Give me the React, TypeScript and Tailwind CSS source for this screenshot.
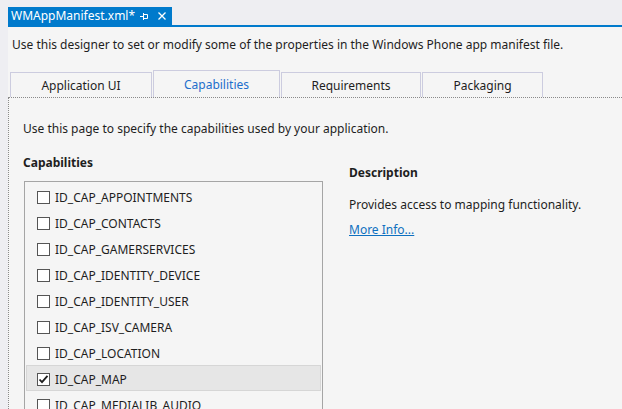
import React from "react";

const caps = [
  "ID_CAP_APPOINTMENTS",
  "ID_CAP_CONTACTS",
  "ID_CAP_GAMERSERVICES",
  "ID_CAP_IDENTITY_DEVICE",
  "ID_CAP_IDENTITY_USER",
  "ID_CAP_ISV_CAMERA",
  "ID_CAP_LOCATION",
  "ID_CAP_MAP",
  "ID_CAP_MEDIALIB_AUDIO",
  "ID_CAP_MEDIALIB_PHOTO",
];

function Checkbox({ checked }: { checked: boolean }) {
  return (
    <div className="w-[13px] h-[13px] border border-[#555555] bg-white flex items-center justify-center shrink-0">
      {checked && (
        <svg width="11" height="11" viewBox="0 0 11 11">
          <path d="M1.5 5.5 L4 8.2 L9.5 1.8" fill="none" stroke="#1e1e1e" strokeWidth="1.8" />
        </svg>
      )}
    </div>
  );
}

export default function App() {
  const tabs = [
    { label: "Application UI", w: "w-[142px]", active: false },
    { label: "Capabilities", w: "w-[127px]", active: true },
    { label: "Requirements", w: "w-[140px]", active: false },
    { label: "Packaging", w: "w-[121px]", active: false },
  ];
  return (
    <div
      className="w-[622px] h-[409px] bg-[#eeeef2] flex overflow-hidden text-[#1e1e1e] text-[12px]"
      style={{ fontFamily: '"Noto Sans", "Open Sans", sans-serif' }}
    >
      <div className="w-[8px] shrink-0" />
      <div className="flex-1 flex flex-col min-w-0">
        <div className="h-[7px] shrink-0" />
        <div className="h-[18px] flex shrink-0">
          <div className="w-[164px] bg-[#007acc] text-white flex items-center pl-[3px] leading-[18px] whitespace-nowrap">
            <span className="text-[12px]">WMAppManifest.xml*</span>
            <svg width="8" height="8" viewBox="0 0 8 8" className="ml-[5px] shrink-0">
              <path d="M0 4.5 H3 M3.5 1 V8 M3.5 2.5 H7.5 V6.5 H3.5" fill="none" stroke="white" strokeWidth="1" />
            </svg>
            <svg width="8" height="8" viewBox="0 0 8 8" className="ml-[10px] shrink-0">
              <path d="M0.5 0.5 L7.5 7.5 M7.5 0.5 L0.5 7.5" stroke="white" strokeWidth="1.3" />
            </svg>
          </div>
        </div>
        <div className="h-[2px] bg-[#007acc] shrink-0" />
        <div className="flex-1 bg-[#f5f5f5] flex flex-col">
          <div className="pl-[4px] pt-[10px] leading-[16px] whitespace-nowrap">
            Use this designer to set or modify some of the properties in the Windows Phone app manifest file.
          </div>
          <div className="flex items-end pl-[2px] mt-[17px] h-[27px]">
            {tabs.map((t) => (
              <div
                key={t.label}
                className={`${t.w} ${t.active ? "h-[27px] text-[#1e6fcc]" : "h-[25px]"} mr-[1px] border border-b-0 border-[#ccccdf] flex items-center justify-center pt-[1px]`}
              >
                {t.label}
              </div>
            ))}
          </div>
          <div className="flex-1 border-t border-l border-dotted border-[#8a8a8a] pl-[14px] flex">
            <div className="flex flex-col w-[300px]">
              <div className="mt-[23px] leading-[16px] whitespace-nowrap">
                Use this page to specify the capabilities used by your application.
              </div>
              <div className="mt-[18px] font-bold leading-[16px]">Capabilities</div>
              <div className="mt-[10px] ml-[1px] w-[299px] h-[300px] border border-[#a5a5a5] pt-[1px] px-[1px]">
                {caps.map((c) => {
                  const sel = c === "ID_CAP_MAP";
                  return (
                    <div
                      key={c}
                      className={`h-[26px] flex items-center pt-[3px] ${sel ? "bg-[#e6e6e6] border border-[#d6d6d6] pl-[10px]" : "pl-[11px]"}`}
                    >
                      <Checkbox checked={sel} />
                      <span className="ml-[5px]">{c}</span>
                    </div>
                  );
                })}
              </div>
            </div>
            <div className="flex flex-col ml-[26px] mt-[67px]">
              <div className="font-bold leading-[16px]">Description</div>
              <div className="mt-[16px] leading-[16px]">Provides access to mapping functionality.</div>
              <div className="mt-[9px] leading-[16px] text-[#0e70c0] underline">More Info...</div>
            </div>
          </div>
        </div>
      </div>
    </div>
  );
}
